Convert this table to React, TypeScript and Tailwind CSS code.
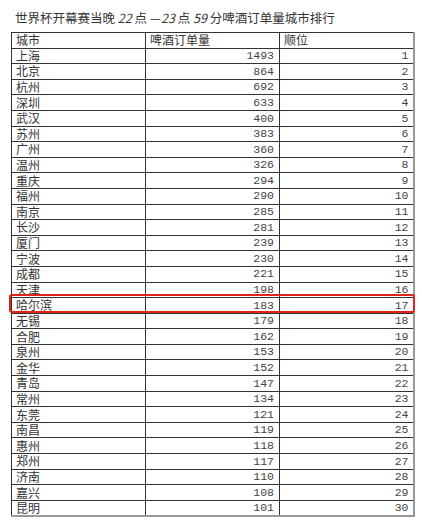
const rows: [string, number][] = [
  ["上海", 1493],
  ["北京", 864],
  ["杭州", 692],
  ["深圳", 633],
  ["武汉", 400],
  ["苏州", 383],
  ["广州", 360],
  ["温州", 326],
  ["重庆", 294],
  ["福州", 290],
  ["南京", 285],
  ["长沙", 281],
  ["厦门", 239],
  ["宁波", 230],
  ["成都", 221],
  ["天津", 198],
  ["哈尔滨", 183],
  ["无锡", 179],
  ["合肥", 162],
  ["泉州", 153],
  ["金华", 152],
  ["青岛", 147],
  ["常州", 134],
  ["东莞", 121],
  ["南昌", 119],
  ["惠州", 118],
  ["郑州", 117],
  ["济南", 110],
  ["嘉兴", 108],
  ["昆明", 101],
]

export default function App() {
  return (
    <div
      className="w-[422px] h-[523px] bg-white text-[#333] overflow-hidden"
      style={{ fontFamily: '"Noto Sans CJK SC", "Liberation Sans", sans-serif' }}
    >
      <h1 className="pl-[15px] pt-[9px] h-[32px] text-[12.5px] leading-[18px] font-normal text-[#333] whitespace-nowrap">
        世界杯开幕赛当晚 <span className="italic">22</span> 点 —<span className="italic">23</span> 点{" "}
        <span className="italic">59</span> 分啤酒订单量城市排行
      </h1>

      <div className="relative ml-[11px] w-[402px]">
        <table className="w-[402px] table-fixed border-collapse border-r-2 border-b-2 border-r-[#999] border-b-[#999] text-[12px] leading-none">
          <thead>
            <tr className="h-[15.6px]">
              <th className="w-[134px] border border-[#333] pl-[4px] text-left font-normal">城市</th>
              <th className="w-[134px] border border-[#333] pl-[4px] text-left font-normal">啤酒订单量</th>
              <th className="w-[134px] border border-[#333] pl-[4px] text-left font-normal">顺位</th>
            </tr>
          </thead>
          <tbody>
            {rows.map(([city, count], i) => (
              <tr key={city} className="h-[15.6px]">
                <td className="border border-[#333] pl-[4px]">{city}</td>
                <td
                  className="border border-[#333] pr-[5px] text-right text-[#444]"
                  style={{ fontFamily: '"Liberation Mono", monospace', fontSize: 11.5 }}
                >
                  {count}
                </td>
                <td
                  className="border border-[#333] pr-[4px] text-right text-[#444]"
                  style={{ fontFamily: '"Liberation Mono", monospace', fontSize: 11.5 }}
                >
                  {i + 1}
                </td>
              </tr>
            ))}
          </tbody>
        </table>

        {/* highlight on 哈尔滨 */}
        <div className="absolute left-[-2px] top-[262px] w-[406px] h-[19px] border-2 border-[#e2231a] rounded-[3px] pointer-events-none" />
      </div>
    </div>
  )
}
